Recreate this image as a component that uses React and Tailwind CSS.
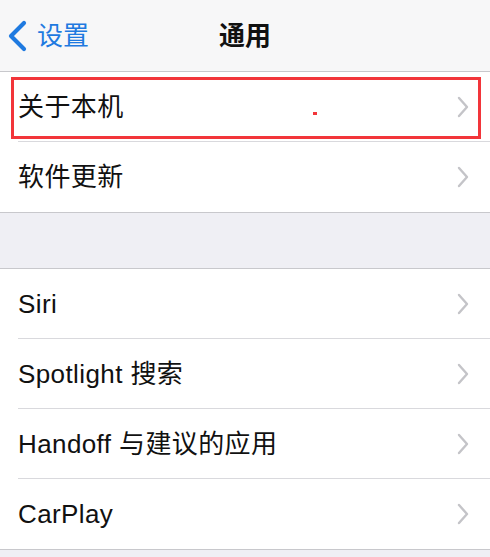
import React from "react";

const FONT = { fontFamily: '"Liberation Sans", "Noto Sans CJK SC", sans-serif' };

function Chevron() {
  return (
    <svg width="14" height="24" viewBox="0 0 14 24" className="shrink-0">
      <path d="M3 3 L11 12 L3 21" fill="none" stroke="#c4c4c8" strokeWidth="2.4" strokeLinecap="round" strokeLinejoin="round" />
    </svg>
  );
}

function Row({ label, last, highlight }) {
  return (
    <div className="relative h-[70px] flex items-center pl-[18px]">
      {highlight && (
        <div className="absolute left-[11px] right-[9px] top-[5px] bottom-[3px] border-[3px] border-[#f2353a]" />
      )}
      {highlight && <div className="absolute left-[313px] top-[40px] w-[4px] h-[3px] bg-[#f2353a]" />}
      <div className={"flex-1 h-full flex items-center pr-[20px] " + (last ? "" : "border-b border-[#d9d9dd]")}>
        <span className="flex-1 text-[26px] tracking-[0.4px] text-[#111] leading-none">{label}</span>
        <Chevron />
      </div>
    </div>
  );
}

export default function App() {
  return (
    <div className="w-[490px] h-[557px] bg-[#efeff4] overflow-hidden" style={FONT}>
      <div className="h-[72px] bg-[#f7f7f8] border-b border-[#c8c8cc] flex items-center relative">
        <div className="flex items-center pl-[7px] text-[#1f7ae0]">
          <svg width="22" height="32" viewBox="0 0 22 32">
            <path d="M17 3 L4 16 L17 29" fill="none" stroke="#1f7ae0" strokeWidth="4.2" strokeLinecap="round" strokeLinejoin="round" />
          </svg>
          <span className="ml-[8px] text-[26px] leading-none">设置</span>
        </div>
        <div className="absolute inset-0 flex items-center justify-center pointer-events-none">
          <span className="text-[26px] font-bold text-[#111] leading-none">通用</span>
        </div>
      </div>

      <div className="bg-white border-b border-[#c8c8cc]">
        <Row label="关于本机" highlight />
        <Row label="软件更新" last />
      </div>

      <div className="h-[55px]" />

      <div className="bg-white border-y border-[#c8c8cc]">
        <Row label="Siri" />
        <Row label="Spotlight 搜索" />
        <Row label="Handoff 与建议的应用" />
        <Row label="CarPlay" last />
      </div>
    </div>
  );
}
